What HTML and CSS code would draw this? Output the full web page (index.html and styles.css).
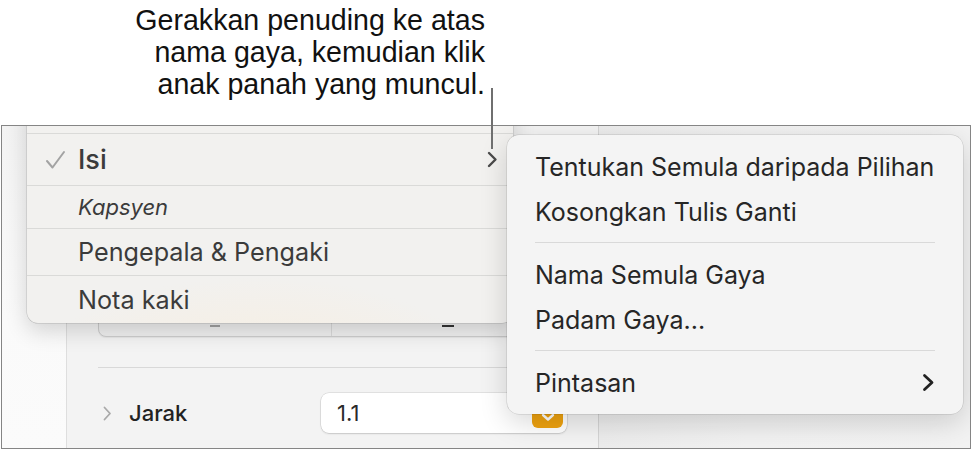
FILE: index.html
```html
<!DOCTYPE html>
<html lang="ms">
<head>
<meta charset="utf-8">
<title>Gaya</title>
<link rel="stylesheet" href="styles.css">
</head>
<body>
<div class="page">
  <div class="callout">
    <p class="callout-text">Gerakkan penuding ke atas<br>nama gaya, kemudian klik<br>anak panah yang muncul.</p>
  </div>
  <div class="leader"></div>
  <div class="frame">
    <div class="strip"></div>
    <div class="inspector">
      <div class="field-box">
        <div class="fb-cell fb-left"><span class="dash dash-light"></span></div>
        <div class="fb-cell"><span class="dash"></span></div>
      </div>
      <div class="sep"></div>
      <div class="prop-row">
        <svg class="disclosure" width="9" height="15" viewBox="0 0 9 15"><polyline points="1.5,1.5 7,7.5 1.5,13.5" fill="none" stroke="#a9a9a9" stroke-width="1.8" stroke-linecap="round" stroke-linejoin="round"/></svg>
        <span class="prop-label">Jarak</span>
        <div class="num-input">
          <span class="num-value">1.1</span>
          <span class="stepper"><svg width="14" height="9" viewBox="0 0 14 9"><polyline points="2,2 7,6.5 12,2" fill="none" stroke="#ffffff" stroke-width="2.4" stroke-linecap="round" stroke-linejoin="round"/></svg></span>
        </div>
      </div>
    </div>
    <div class="doc"></div>

    <div class="style-menu">
      <div class="sm-row sm-hidden"></div>
      <div class="sm-row sm-isi">
        <span class="check"><svg width="21" height="20" viewBox="0 0 21 20"><polyline points="2,11 7.5,17.5 19,2" fill="none" stroke="#a3a3a3" stroke-width="2" stroke-linecap="round" stroke-linejoin="round"/></svg></span>
        <span class="sm-text isi-text">Isi</span>
        <svg class="sm-chev" width="11" height="17" viewBox="0 0 11 17"><polyline points="2,2 8.5,8.5 2,15" fill="none" stroke="#4a4a4a" stroke-width="2.4" stroke-linecap="round" stroke-linejoin="round"/></svg>
      </div>
      <div class="sm-row sm-kapsyen"><span class="check"></span><span class="sm-text italic">Kapsyen</span></div>
      <div class="sm-row sm-peng"><span class="check"></span><span class="sm-text">Pengepala &amp; Pengaki</span></div>
      <div class="sm-row sm-nota"><span class="check"></span><span class="sm-text">Nota kaki</span></div>
    </div>

    <div class="submenu">
      <div class="sub-item">Tentukan Semula daripada Pilihan</div>
      <div class="sub-item">Kosongkan Tulis Ganti</div>
      <div class="sub-sep"></div>
      <div class="sub-item">Nama Semula Gaya</div>
      <div class="sub-item">Padam Gaya...</div>
      <div class="sub-sep"></div>
      <div class="sub-item sub-has-chev">
        <span>Pintasan</span>
        <svg width="13" height="19" viewBox="0 0 13 19"><polyline points="2.5,2.5 10,9.5 2.5,16.5" fill="none" stroke="#222222" stroke-width="2.8" stroke-linecap="round" stroke-linejoin="round"/></svg>
      </div>
    </div>
  </div>
</div>
</body>
</html>
```

FILE: styles.css
```css
* { box-sizing: border-box; }
html, body { margin: 0; padding: 0; background: #ffffff; }
body { width: 977px; height: 451px; overflow: hidden; font-family: Inter, "Noto Sans", sans-serif; }

.page { position: relative; width: 977px; height: 451px; }

.callout { height: 125px; padding-top: 4px; }
.callout-text {
  margin: 0;
  width: 485px;
  text-align: right;
  font-family: "Liberation Sans", Arial, sans-serif;
  font-size: 28.6px;
  line-height: 32px;
  color: #111111;
}
.leader {
  position: absolute;
  left: 491px;
  top: 88px;
  width: 1.5px;
  height: 61px;
  background: #6f6f6f;
  z-index: 5;
}

.frame {
  position: relative;
  margin-left: 1px;
  width: 970px;
  height: 324px;
  border: 1px solid #858585;
  display: flex;
  overflow: hidden;
  background: #f0f0f0;
}
.strip { width: 64px; flex: none; background: linear-gradient(#f3f3f3, #fafafa 60%, #fbfbfb); }
.inspector {
  width: 533px;
  flex: none;
  background: #f3f3f3;
  border-left: 1px solid #dedede;
  border-right: 1px solid #d4d4d4;
  padding-left: 31px;
}
.doc { flex: 1; background: linear-gradient(90deg, #ececec, #f1f1f1 40%, #f2f2f2); }

.field-box {
  margin-top: 125px;
  width: 467px;
  height: 86px;
  border: 1px solid #cdcdcd;
  border-radius: 8px;
  background: #efefef;
  box-shadow: 0 1px 1px rgba(0,0,0,0.06);
  display: flex;
}
.fb-cell { flex: 1; display: flex; align-items: flex-end; justify-content: center; padding-bottom: 9px; }
.fb-left { flex: none; width: 233px; border-right: 1px solid #d9d9d9; }
.dash { display: block; width: 12px; height: 2px; background: #333333; }
.dash-light { background: #a0a0a0; width: 10px; }

.sep { margin-top: 30px; height: 1px; background: #d8d8d8; }

.prop-row { margin-top: 25px; height: 40px; display: flex; align-items: center; padding-left: 5px; }
.disclosure { flex: none; }
.prop-label { margin-left: 17px; font-size: 22px; font-weight: 500; color: #222222; width: 192px; }
.num-input {
  position: relative;
  width: 246px;
  height: 40px;
  background: #ffffff;
  border-radius: 8px;
  box-shadow: 0 0 0 0.5px rgba(0,0,0,0.14), 0 1px 2px rgba(0,0,0,0.12);
  display: flex;
  align-items: center;
  justify-content: space-between;
  padding: 0 4px 0 16px;
}
.num-value { font-size: 22px; color: #2a2a2a; }
.stepper {
  width: 31px;
  height: 30px;
  border-radius: 6px;
  background: #eea20f;
  display: flex;
  align-items: flex-end;
  justify-content: center;
  padding-bottom: 6px;
}

/* style popup menu */
.style-menu {
  position: absolute;
  left: 25px;
  top: -30px;
  width: 486px;
  border-radius: 0 0 11px 11px;
  background:
    radial-gradient(ellipse 260px 140px at 230px 320px, rgba(250,236,214,0.9), rgba(250,236,214,0) 100%),
    #f2f1ef;
  box-shadow: 0 8px 22px rgba(0,0,0,0.16), 0 0 0 0.5px rgba(0,0,0,0.18);
  z-index: 2;
  color: #3b3b3b;
}
.sm-row { display: flex; align-items: center; padding-left: 18px; padding-right: 15px; border-top: 1px solid #dadad8; }
.sm-hidden { height: 37px; border-top: none; }
.sm-isi { height: 52px; }
.sm-kapsyen { height: 43px; }
.sm-peng { height: 47px; }
.sm-nota { height: 48px; }
.check { width: 33px; flex: none; display: flex; align-items: center; }
.sm-text { font-size: 25.2px; flex: 1; }
.isi-text { font-size: 27px; font-weight: 500; }
.italic { font-style: italic; font-size: 22px; }
.sm-chev { flex: none; }

/* submenu */
.submenu {
  position: absolute;
  left: 505px;
  top: 9px;
  width: 456px;
  height: 279px;
  border-radius: 12px;
  background: #f4f4f4;
  box-shadow: 0 8px 28px rgba(0,0,0,0.16), 0 0 0 0.5px rgba(0,0,0,0.16);
  padding: 9px 28px 9px 28px;
  z-index: 3;
  color: #262626;
}
.sub-item { height: 45px; display: flex; align-items: center; font-size: 25px; }
.sub-has-chev { justify-content: space-between; }
.sub-sep { height: 1px; margin: 8px 0 9px; background: #d9d9d9; }
```
